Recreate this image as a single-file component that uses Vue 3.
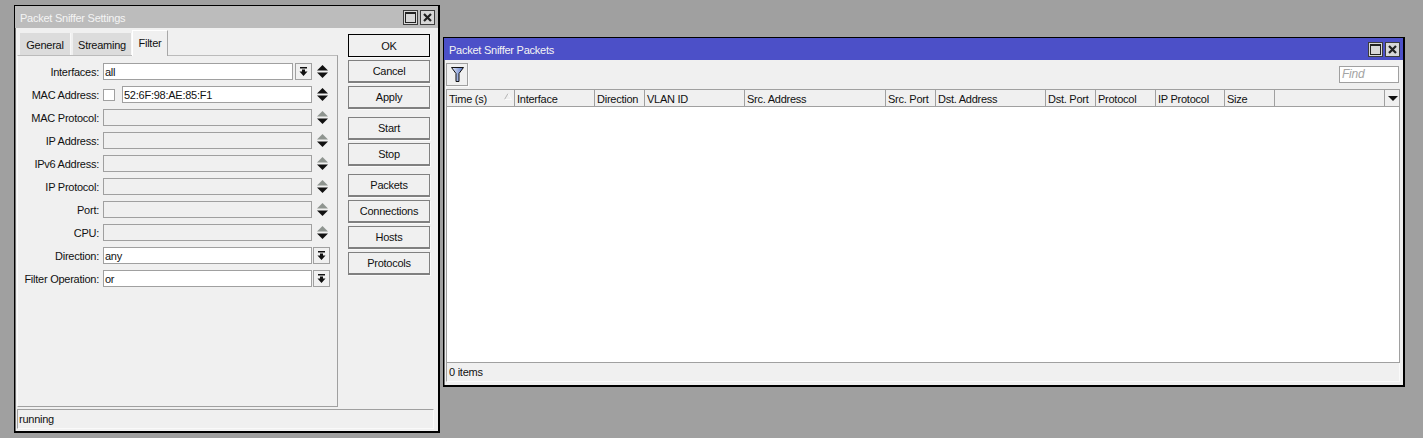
<script setup>
const rows = [
  { label: 'Interfaces:', value: 'all', kind: 'drop', active: true },
  { label: 'MAC Address:', value: '52:6F:98:AE:85:F1', kind: 'check', active: true },
  { label: 'MAC Protocol:', kind: 'off' },
  { label: 'IP Address:', kind: 'off' },
  { label: 'IPv6 Address:', kind: 'off' },
  { label: 'IP Protocol:', kind: 'off' },
  { label: 'Port:', kind: 'off' },
  { label: 'CPU:', kind: 'off' },
  { label: 'Direction:', value: 'any', kind: 'select' },
  { label: 'Filter Operation:', value: 'or', kind: 'select' }
]
const groups = [['OK', 'Cancel', 'Apply'], ['Start', 'Stop'], ['Packets', 'Connections', 'Hosts', 'Protocols']]
const cols = [
  ['Time (s)', 68], ['Interface', 80], ['Direction', 50], ['VLAN ID', 100], ['Src. Address', 141],
  ['Src. Port', 50], ['Dst. Address', 110], ['Dst. Port', 50], ['Protocol', 60], ['IP Protocol', 69], ['Size', 50]
]
</script>

<template>
  <div class="desk">
    <section class="win settings">
      <header class="title">
        <span>Packet Sniffer Settings</span>
        <div class="wbtns">
          <button class="wb"><i class="sq"></i></button>
          <button class="wb"><svg width="11" height="11" viewBox="0 0 11 11"><path d="M2 2l7 7M9 2l-7 7" stroke="#222" stroke-width="2.2" fill="none"/></svg></button>
        </div>
      </header>
      <div class="sbody">
        <div class="left">
          <div class="tabs">
            <div class="tab t1">General</div>
            <div class="tab t2">Streaming</div>
            <div class="tab on">Filter</div>
          </div>
          <div class="panel">
            <div v-for="r in rows" :key="r.label" class="row" :class="'k-' + r.kind">
              <label>{{ r.label }}</label>
              <span v-if="r.kind === 'check'" class="check"></span>
              <div class="field" :class="{ off: r.kind === 'off' }">{{ r.value }}</div>
              <button v-if="r.kind === 'drop' || r.kind === 'select'" class="dd">
                <svg width="9" height="9" viewBox="0 0 9 9"><path d="M1 0h7v1.500H1zM3 2.500h3v2h2.500L4.500 9 .5 4.500H3z" fill="#111"/></svg>
              </button>
              <span v-if="r.kind !== 'select'" class="updown">
                <svg width="13" height="13" viewBox="0 0 13 13"><path d="M6.500 0l5.500 5.500H1z" :fill="r.active ? '#111' : '#8f9590'"/><path d="M1 7.500h11L6.500 13z" fill="#111"/></svg>
              </span>
            </div>
          </div>
        </div>
        <aside class="btns">
          <div v-for="(g, i) in groups" :key="i" class="grp">
            <button v-for="b in g" :key="b" class="btn" :class="{ def: b === 'OK' }">{{ b }}</button>
          </div>
        </aside>
      </div>
      <footer class="status s1">running</footer>
    </section>

    <section class="win packets">
      <header class="title blue">
        <span>Packet Sniffer Packets</span>
        <div class="wbtns">
          <button class="wb"><i class="sq"></i></button>
          <button class="wb"><svg width="11" height="11" viewBox="0 0 11 11"><path d="M2 2l7 7M9 2l-7 7" stroke="#222" stroke-width="2.2" fill="none"/></svg></button>
        </div>
      </header>
      <div class="toolbar">
        <button class="fbtn">
          <svg width="13" height="15" viewBox="0 0 13 15">
            <defs><linearGradient id="fg" x1="0" y1="0" x2="1" y2="0"><stop offset="0" stop-color="#e6ebf8"/><stop offset="1" stop-color="#5a78c8"/></linearGradient></defs>
            <path d="M.5.500h12L8 6.500v8H5v-8z" fill="url(#fg)" stroke="#111" stroke-width="1"/>
          </svg>
        </button>
        <div class="find">Find</div>
      </div>
      <div class="table">
        <div class="thead">
          <div v-for="(c, i) in cols" :key="c[0]" class="th" :style="{ width: c[1] + 'px' }">
            {{ c[0] }}
            <svg v-if="i === 0" class="sort" width="8" height="7" viewBox="0 0 8 7"><path d="M4 .5L.5 6.500" fill="none" stroke="#b4b4b4"/><path d="M4 .5L7.500 6.500H.5" fill="none" stroke="#fafafa"/></svg>
          </div>
          <div class="th fill"></div>
          <div class="th arrow"><svg width="10" height="5" viewBox="0 0 10 5"><path d="M0 0h10L5 5z" fill="#111"/></svg></div>
        </div>
        <div class="tbody"></div>
      </div>
      <footer class="status s2">0 items</footer>
    </section>
  </div>
</template>

<style>
html, body { margin: 0; background: #a0a0a0; overflow: hidden; }
</style>

<style scoped>
.desk { position: relative; width: 1423px; height: 438px; background: #a0a0a0; font: 11px "Liberation Sans", Arial, sans-serif; letter-spacing: -.25px; color: #111; }
.win { position: absolute; box-sizing: border-box; border: 2px solid #000; border-width: 1px 2px 2px 1px; background: #f0f0f0; display: flex; flex-direction: column; box-shadow: inset 1px 1px 0 #777; }
.settings { left: 14px; top: 5px; width: 426px; height: 428px; }
.packets { left: 443px; top: 37px; width: 962px; height: 350px; }
.title { height: 22px; flex: none; box-sizing: border-box; background: #bcbcbc; color: #f4f4f4; display: flex; align-items: center; justify-content: space-between; padding: 1px 3px 0 5px; }
.title.blue { background: #4c50c8; }
.wbtns { display: flex; gap: 2px; }
.wb { width: 15px; height: 15px; padding: 0; border: 1px solid #3c3c3c; background: #d8d8d8; display: flex; align-items: center; justify-content: center; }
.sq { display: block; width: 11px; height: 11px; box-sizing: border-box; border: 1px solid #222; border-top-width: 2px; }
.sbody { flex: 1; display: flex; min-height: 0; }
.left { width: 323px; box-sizing: border-box; flex: none; display: flex; flex-direction: column; padding-left: 2px; }
.tabs { display: flex; padding: 3px 0 0 3px; height: 24px; align-items: flex-end; gap: 1px; }
.tab { height: 22px; box-sizing: border-box; background: #dcdcdc; line-height: 25px; text-align: center; border-right: 1px solid #f8f8f8; }
.t1 { width: 51px; }
.t2 { width: 59px; margin-left: 1px; }
.tab.on { width: 36px; height: 26px; background: #f0f0f0; line-height: 24px; border: 1px solid #a8a8a8; border-bottom: 0; margin: 0 0 -1px -1px; position: relative; z-index: 1; border-left-color: #fff; border-top-color: #fff; }
.panel { flex: none; height: 352px; box-sizing: border-box; border-top: 1px solid #bbb; border-right: 1px solid #a0a0a0; border-bottom: 1px solid #a0a0a0; border-left: 1px solid #fafafa; padding-top: 7px; display: flex; flex-direction: column; gap: 6px; }
.row { display: flex; height: 17px; align-items: center; }
.row label { width: 81px; text-align: right; margin-right: 4px; flex: none; }
.check { width: 10px; height: 10px; flex: none; margin-right: 7px; border: 1px solid #a0a0a0; background: #fff; }
.field { flex: 1; min-width: 0; height: 17px; box-sizing: border-box; border: 1px solid #a0a0a0; background: #fff; padding-left: 1px; line-height: 16px; }
.field.off { background: #f0f0f0; }
.dd { width: 17px; height: 17px; flex: none; margin-left: 2px; padding: 0; background: #f0f0f0; border: 1px solid #a0a0a0; display: flex; align-items: center; justify-content: center; }
.k-select .dd { margin: 0 7px 0 1px; }
.updown { width: 13px; height: 13px; margin: 0 8px 0 4px; flex: none; display: flex; }
.btns { flex: 1; display: flex; flex-direction: column; padding: 6px 8px 0 10px; gap: 8px; }
.grp { display: flex; flex-direction: column; gap: 3px; }
.btn { height: 23px; padding: 0; box-sizing: border-box; background: #f0f0f0; border: 1px solid #808080; border-width: 1px 1px 2px 1px; box-shadow: 1px 1px 0 #fafafa; font: inherit; letter-spacing: inherit; color: #111; }
.btn.def { border: 1px solid #000; }
.status { flex: none; box-sizing: border-box; }
.s1 { margin: 2px 4px 2px 2px; height: 20px; line-height: 18px; padding-left: 1px; border-top: 1px solid #a0a0a0; border-left: 1px solid #a0a0a0; border-bottom: 1px solid #fafafa; border-right: 1px solid #fafafa; }
.toolbar { height: 29px; flex: none; display: flex; align-items: center; justify-content: space-between; padding: 0 4px 0 2px; }
.fbtn { width: 22px; height: 23px; padding: 0; background: #f0f0f0; border: 1px solid #a0a0a0; box-shadow: 1px 1px 0 #fafafa; display: flex; align-items: center; justify-content: center; }
.find { width: 60px; height: 17px; box-sizing: border-box; background: #fff; border: 1px solid #a0a0a0; padding-left: 2px; line-height: 15px; font-size: 12px; color: #a4a4a4; font-style: italic; }
.table { flex: 1; min-height: 0; margin: 0 3px 0 2px; display: flex; flex-direction: column; border: 1px solid #a0a0a0; }
.thead { display: flex; height: 17px; box-sizing: border-box; flex: none; border-bottom: 1px solid #a0a0a0; background: #f0f0f0; }
.th { position: relative; box-sizing: border-box; height: 16px; border-right: 1px solid #a0a0a0; padding-left: 2px; line-height: 18px; white-space: nowrap; flex: none; }
.th.fill { width: 110px; }
.th.arrow { flex: 1; border: 0; padding: 6px 0 0 3px; line-height: 0; }
.sort { position: absolute; right: 2px; top: 3px; }
.tbody { flex: 1; background: #fff; }
.s2 { height: 19px; margin: 0 3px 3px 2px; line-height: 19px; padding-left: 2px; border-left: 1px solid #a0a0a0; border-right: 1px solid #fafafa; border-bottom: 1px solid #fafafa; }
</style>
